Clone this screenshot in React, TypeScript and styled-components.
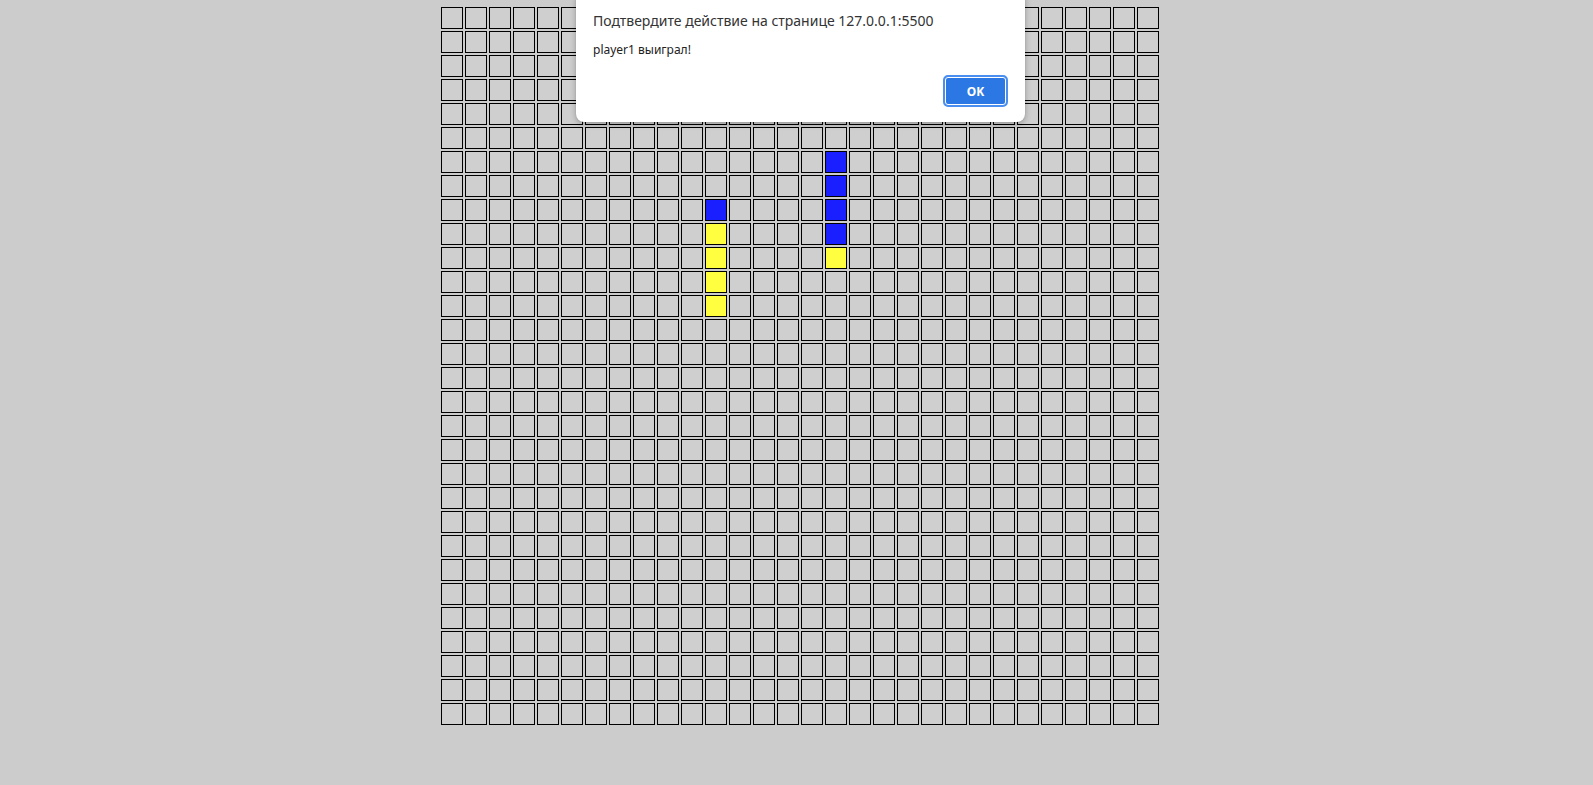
import React from "react";
import styled, { createGlobalStyle } from "styled-components";

const Global = createGlobalStyle`
  html, body { margin: 0; padding: 0; background: #cccccc; }
  body { font-family: "Liberation Sans", Arial, sans-serif; }
`;

const SIZE = 30;
const BLUE = new Set(["6,16", "7,16", "8,16", "9,16", "8,11"]);
const YELLOW = new Set(["10,16", "9,11", "10,11", "11,11", "12,11"]);

const Page = styled.div`
  position: relative;
  min-height: 785px;
  display: flex;
  justify-content: center;
  align-items: flex-start;
  padding: 6px 0 0 7px;
  box-sizing: border-box;
`;

const Board = styled.div`
  display: grid;
  grid-template-columns: repeat(${SIZE}, 24px);
  grid-auto-rows: 24px;
`;

const Cell = styled.div<{ $tone: "empty" | "blue" | "yellow" }>`
  margin: 1px;
  width: 20px;
  height: 20px;
  border: 1px solid #000;
  background: ${(p) =>
    p.$tone === "blue" ? "#1a1fff" : p.$tone === "yellow" ? "#ffff40" : "#cfcfcf"};
`;

const Dialog = styled.div`
  position: absolute;
  left: 576px;
  top: -8px;
  width: 449px;
  height: 130px;
  box-sizing: border-box;
  background: #fff;
  border-radius: 8px;
  box-shadow: 0 2px 6px rgba(0, 0, 0, 0.28), 0 0 1px rgba(0, 0, 0, 0.2);
  padding: 19px 17px 15px 17px;
  display: flex;
  flex-direction: column;
  font-family: "Noto Sans", "Open Sans", sans-serif;
`;

const Title = styled.div`
  font-size: 14px;
  line-height: 19px;
  color: #333;
`;

const Message = styled.div`
  margin-top: 12px;
  font-size: 12px;
  line-height: 16px;
  color: #222;
`;

const Actions = styled.div`
  margin-top: auto;
  display: flex;
  justify-content: flex-end;
`;

const OkButton = styled.button`
  width: 65px;
  height: 32px;
  border-radius: 5px;
  border: 2px solid #4a8ff0;
  box-shadow: inset 0 0 0 1px #ffffff;
  background: #2b78e4;
  color: #fff;
  font-family: "Noto Sans", "Open Sans", sans-serif;
  font-weight: 700;
  font-size: 12px;
  padding: 0;
  cursor: pointer;
`;

export default function App() {
  const cells = [];
  for (let r = 0; r < SIZE; r++) {
    for (let c = 0; c < SIZE; c++) {
      const k = `${r},${c}`;
      const tone = BLUE.has(k) ? "blue" : YELLOW.has(k) ? "yellow" : "empty";
      cells.push(<Cell key={k} $tone={tone} />);
    }
  }
  return (
    <>
      <Global />
      <Page>
        <Board>{cells}</Board>
        <Dialog>
          <Title>Подтвердите действие на странице 127.0.0.1:5500</Title>
          <Message>player1 выиграл!</Message>
          <Actions>
            <OkButton>OK</OkButton>
          </Actions>
        </Dialog>
      </Page>
    </>
  );
}
